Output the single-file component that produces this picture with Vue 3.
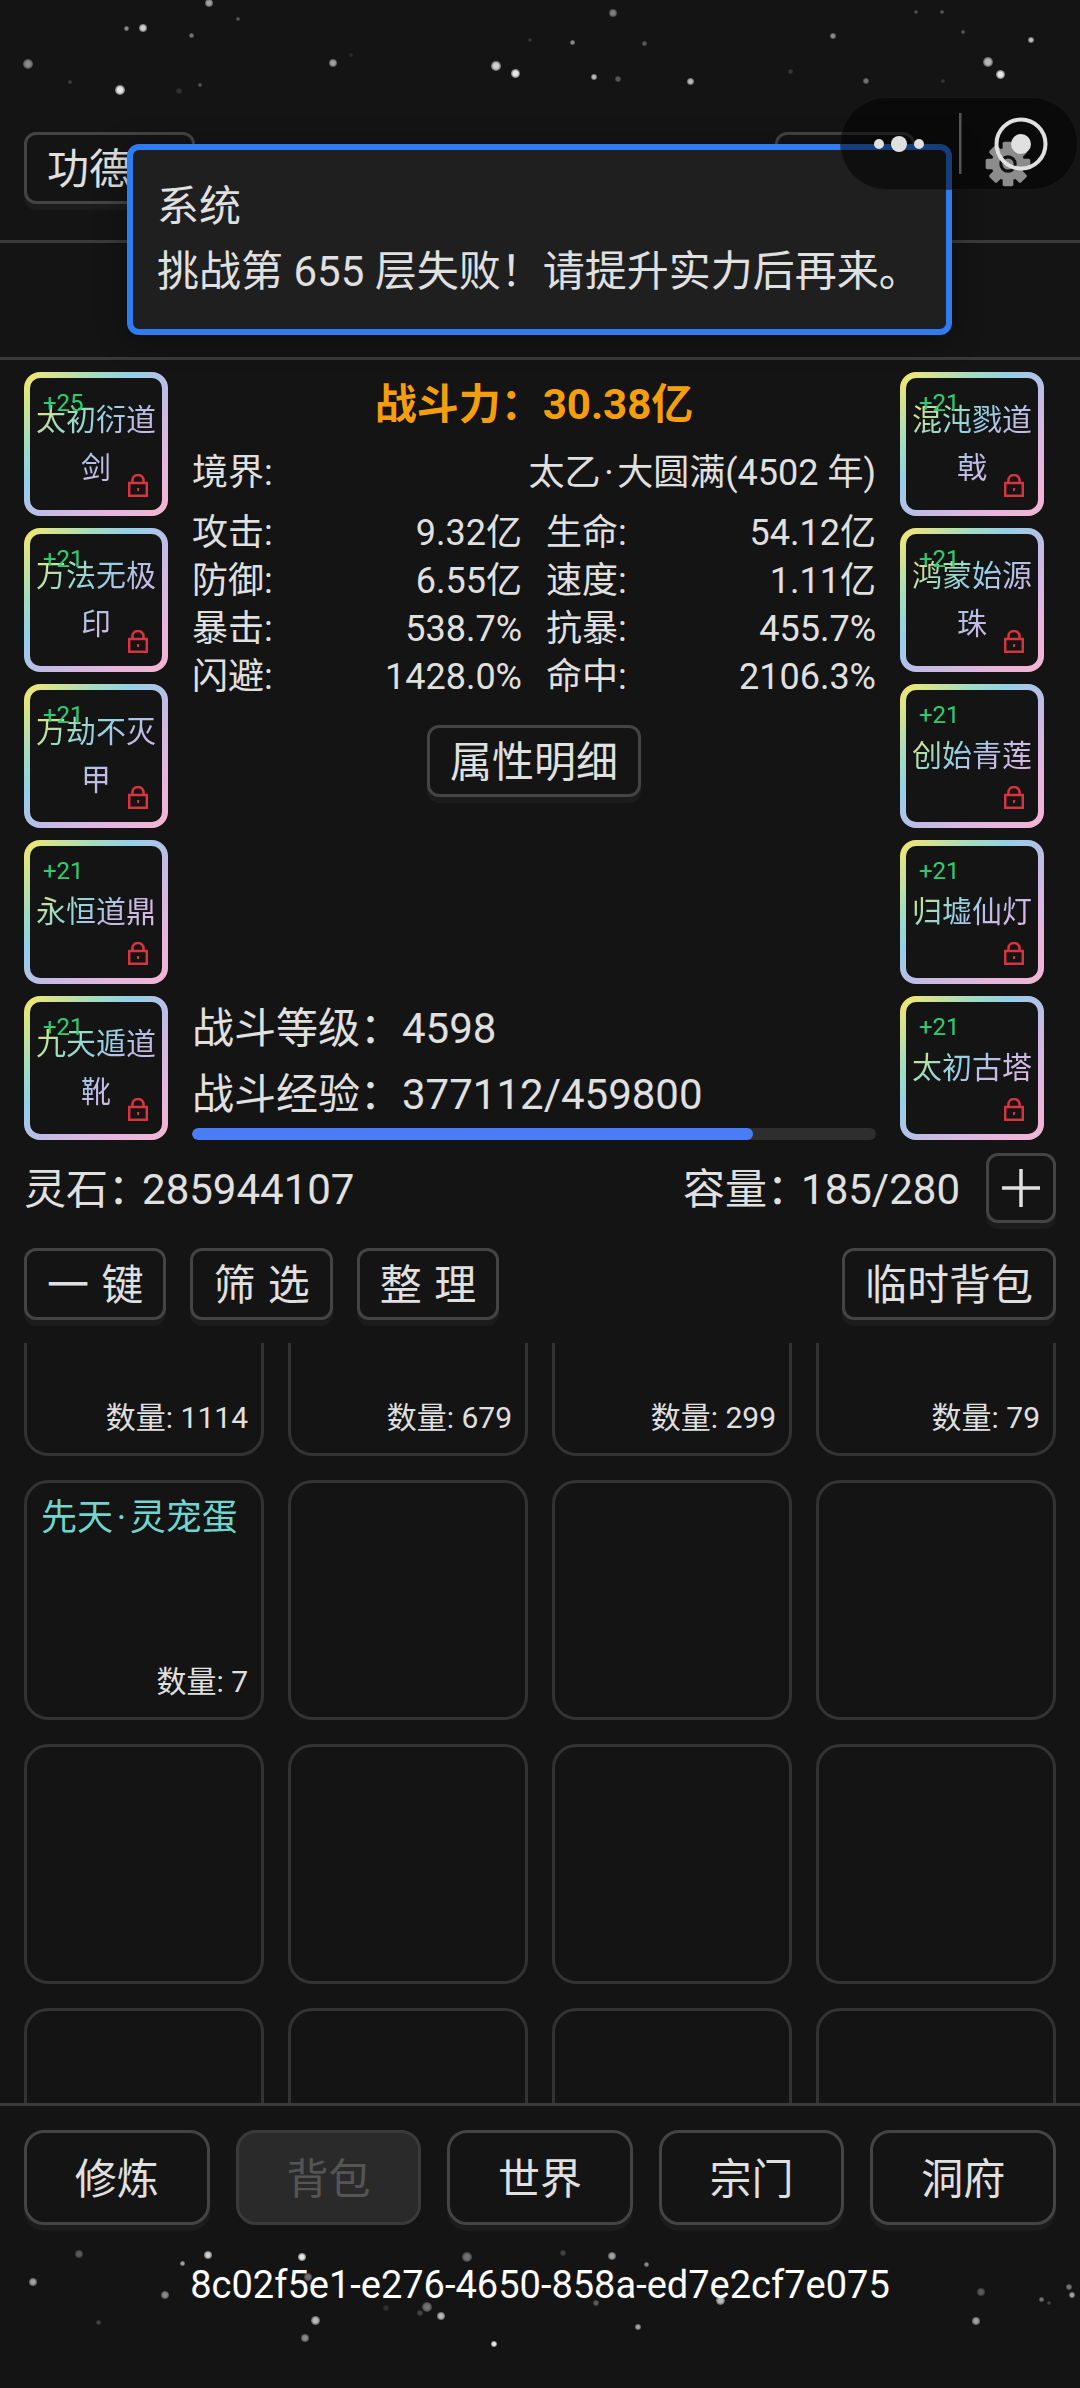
<script setup>
const stars = [
  [209, 3, 4, 0.6], [143, 28, 4, 0.8], [126, 28, 2.5, 0.5], [238, 19, 2, 0.3], [191, 35, 2.5, 0.4],
  [28, 64, 5, 0.5], [120, 90, 5, 0.9], [70, 82, 2, 0.2], [200, 85, 2, 0.3], [179, 91, 3, 0.12],
  [333, 63, 4, 0.6], [496, 66, 5, 0.8], [515, 73, 4.5, 0.9], [594, 77, 3, 0.7], [618, 79, 3, 0.3],
  [690, 81, 3.5, 0.7], [613, 13, 4, 0.45], [572, 42, 2.5, 0.5], [644, 43, 2.5, 0.3], [530, 40, 2, 0.15],
  [833, 36, 3, 0.5], [916, 12, 2, 0.25], [942, 12, 2, 0.3], [963, 32, 2, 0.3], [1031, 40, 3, 0.7],
  [988, 62, 5, 0.7], [1000, 74, 4.5, 0.9], [866, 81, 3, 0.4], [790, 71, 2.5, 0.15], [943, 81, 2, 0.15],
  [351, 55, 2, 0.1],
  [79, 2254, 4, 0.3], [208, 2255, 4, 0.8], [182, 2263, 2.5, 0.6], [302, 2257, 4, 0.9], [467, 2257, 5, 0.4],
  [563, 2253, 3, 0.2], [612, 2256, 4, 0.6], [646, 2264, 2.5, 0.5], [33, 2282, 4, 0.6], [165, 2295, 4, 0.5],
  [308, 2277, 4, 0.4], [427, 2307, 5, 0.4], [441, 2316, 4, 0.7], [420, 2313, 3, 0.2], [386, 2308, 3, 0.12],
  [315, 2320, 4.5, 0.7], [305, 2338, 4, 0.5], [98, 2322, 2.5, 0.2], [596, 2303, 3, 0.3], [720, 2300, 4.5, 0.7],
  [638, 2327, 3, 0.6], [494, 2344, 3, 0.9], [981, 2292, 4, 0.3], [976, 2321, 4, 0.6], [1069, 2287, 3, 0.4],
  [1072, 2295, 3, 0.6], [1041, 2299, 2.5, 0.4], [1049, 2303, 2, 0.2]
]

const leftGear = [
  { name: '太初衍道剑', level: 25 },
  { name: '万法无极印', level: 21 },
  { name: '万劫不灭甲', level: 21 },
  { name: '永恒道鼎', level: 21 },
  { name: '九天遁道靴', level: 21 }
]
const rightGear = [
  { name: '混沌戮道戟', level: 21 },
  { name: '鸿蒙始源珠', level: 21 },
  { name: '创始青莲', level: 21 },
  { name: '归墟仙灯', level: 21 },
  { name: '太初古塔', level: 21 }
]
const gearCols = [leftGear, rightGear]

const stats = [
  ['攻击', '9.32亿'], ['生命', '54.12亿'],
  ['防御', '6.55亿'], ['速度', '1.11亿'],
  ['暴击', '538.7%'], ['抗暴', '455.7%'],
  ['闪避', '1428.0%'], ['命中', '2106.3%']
]

const expPercent = (377112 / 459800) * 100

const bag = [
  { count: 1114 }, { count: 679 }, { count: 299 }, { count: 79 },
  { name: '先天\u200a·\u200a灵宠蛋', count: 7 }, {}, {}, {},
  {}, {}, {}, {},
  {}, {}, {}, {}
]

const tabs = ['修炼', '背包', '世界', '宗门', '洞府']
</script>

<template>
  <div class="page">
    <i
      v-for="(s, i) in stars"
      :key="i"
      class="star"
      :style="{ left: s[0] - s[2] + 'px', top: s[1] - s[2] + 'px', width: s[2] * 2 + 'px', height: s[2] * 2 + 'px', opacity: s[3] }"
    />

    <div class="header">
      <button class="btn merit">功德</button>
      <button class="btn settings" />
    </div>
    <div class="sub-header" />

    <div class="main">
      <template v-for="(col, c) in gearCols" :key="c">
        <div class="gear-col">
          <div v-for="g in col" :key="g.name" class="gear">
            <span class="gear-level">+{{ g.level }}</span>
            <span class="gear-name">{{ g.name }}</span>
            <svg class="lock" width="20" height="23" viewBox="0 0 20 23" fill="none">
              <path d="M4.5 9V6a5.5 5 0 0 1 11 0v3" stroke="#d8333f" stroke-width="2.5" />
              <rect x="1.2" y="9" width="17.6" height="12.8" stroke="#d8333f" stroke-width="2.5" />
              <rect x="9" y="14" width="2" height="3" fill="#d8333f" />
            </svg>
          </div>
        </div>
        <div v-if="c === 0" class="center">
          <div>
            <div class="power">战斗力&#65306;30.38亿</div>
            <div class="realm"><span>境界:</span><span>太乙&#8202;·&#8202;大圆满(4502 年)</span></div>
            <div class="stats">
              <div v-for="s in stats" :key="s[0]" class="stat">
                <span>{{ s[0] }}:</span><span>{{ s[1] }}</span>
              </div>
            </div>
            <div class="detail-wrap"><button class="btn">属性明细</button></div>
          </div>
          <div>
            <div class="level-line">战斗等级&#65306;4598</div>
            <div class="level-line">战斗经验&#65306;377112/459800</div>
            <div class="bar"><div class="bar-fill" :style="{ width: expPercent + '%' }" /></div>
          </div>
        </div>
      </template>
    </div>

    <div class="stone-row">
      <span class="stone-text">灵石<span class="colon">&#65306;</span>285944107</span>
      <div class="capacity">
        <span class="stone-text">容量<span class="colon">&#65306;</span>185/280</span>
        <button class="btn plus">
          <svg width="38" height="38" viewBox="0 0 38 38"><path d="M19 0v38M0 19h38" stroke="#e0e0e0" stroke-width="3.5" /></svg>
        </button>
      </div>
    </div>

    <div class="toolbar">
      <button class="btn">一 键</button>
      <button class="btn">筛 选</button>
      <button class="btn">整 理</button>
      <button class="btn push">临时背包</button>
    </div>

    <div class="bag-view">
      <div class="bag-grid">
        <div v-for="(item, i) in bag" :key="i" class="cell">
          <div v-if="item.name" class="cell-name">{{ item.name }}</div>
          <div v-if="item.count" class="cell-count">数量: {{ item.count }}</div>
        </div>
      </div>
    </div>

    <div class="footer">
      <div class="tabs">
        <button v-for="t in tabs" :key="t" class="btn tab" :class="{ active: t === '背包' }">{{ t }}</button>
      </div>
      <div class="uuid">8c02f5e1-e276-4650-858a-ed7e2cf7e075</div>
    </div>

    <div class="dialog">
      <div>系统</div>
      <div>挑战第 655 层失败&#65281;请提升实力后再来。</div>
    </div>

    <div class="capsule">
      <svg class="cog" width="50" height="50" viewBox="0 0 56 56">
        <g fill="#8c8c8c">
          <circle cx="28" cy="28" r="18.5" />
          <rect v-for="a in [0, 45, 90, 135, 180, 225, 270, 315]" :key="a" x="22" y="3" width="12" height="10" rx="2" :transform="`rotate(${a} 28 28)`" />
        </g>
        <circle cx="28" cy="28" r="8" fill="none" stroke="#111" stroke-width="3.5" />
      </svg>
      <svg class="capsule-icons" width="238" height="93" viewBox="0 0 238 93">
        <circle cx="39" cy="47" r="5" fill="#e0e0e0" />
        <circle cx="59" cy="47" r="8" fill="#e0e0e0" />
        <circle cx="79" cy="47" r="5" fill="#e0e0e0" />
        <rect x="119" y="16" width="2.5" height="61" fill="#555" />
        <circle cx="181" cy="47" r="24.5" fill="none" stroke="#e0e0e0" stroke-width="4" />
        <circle cx="181" cy="47" r="10" fill="#e0e0e0" />
      </svg>
    </div>
  </div>
</template>

<style scoped>
.page {
  position: relative;
  height: 2388px;
  overflow: hidden;
  background: #141414;
  color: #e0e0e0;
  font-family: Roboto, "Noto Sans CJK SC", sans-serif;
  font-size: 42px;
}

.star {
  position: absolute;
  border-radius: 50%;
  background: radial-gradient(circle, #fff 35%, rgba(255, 255, 255, 0) 100%);
}

.btn {
  height: 72px;
  padding: 0 20px 5px;
  border: 3px solid #444;
  border-radius: 12px;
  background: #141414;
  box-shadow: 0 6px 0 #1c1c1c;
  color: #e0e0e0;
  font: inherit;
  word-spacing: 2px;
  white-space: nowrap;
}

.header {
  position: relative;
  display: flex;
  justify-content: space-between;
  height: 243px;
  padding: 132px 165px 0 24px;
  box-sizing: border-box;
  border-bottom: 3px solid #3a3a3a;
}

.merit {
  width: 171px;
  text-align: left;
}

.settings {
  width: 140px;
}

.sub-header {
  position: relative;
  height: 114px;
  border-bottom: 3px solid #3a3a3a;
}

.main {
  display: flex;
  gap: 24px;
  padding: 12px 36px 0 24px;
}

.gear-col {
  display: flex;
  flex-direction: column;
  gap: 12px;
  width: 144px;
}

.gear {
  position: relative;
  display: flex;
  align-items: center;
  justify-content: center;
  height: 144px;
  box-sizing: border-box;
  border: 6px solid transparent;
  border-radius: 16px;
  background:
    linear-gradient(#141414, #141414) padding-box,
    linear-gradient(135deg, #f8e86a 0%, #a6dcc0 25%, #94d0e6 38%, #c0bce6 55%, #e4b6e0 78%, #f6b4d2 100%) border-box;
}

.gear-level {
  position: absolute;
  top: 10px;
  left: 13px;
  color: #2ecc71;
  font-size: 24px;
  line-height: 30px;
}

.gear-name {
  width: 120px;
  background: linear-gradient(135deg, #f8e86a 0%, #9fdcc0 25%, #94d0e6 42%, #c0bce6 60%, #e4b6e0 100%);
  background-clip: text;
  -webkit-background-clip: text;
  color: transparent;
  font-size: 30px;
  line-height: 48px;
  text-align: center;
}

.lock {
  position: absolute;
  right: 14px;
  bottom: 13px;
}

.center {
  display: flex;
  flex-direction: column;
  justify-content: space-between;
  width: 684px;
  height: 768px;
}

.power {
  padding-top: 2px;
  color: #f59e0b;
  font-weight: 700;
  line-height: 62px;
  text-align: center;
}

.realm,
.stat {
  display: flex;
  justify-content: space-between;
  font-size: 36px;
  line-height: 48px;
}

.realm {
  margin-top: 13px;
}

.stats {
  display: grid;
  grid-template-columns: 330px 330px;
  column-gap: 24px;
  margin-top: 12px;
}

.detail-wrap {
  display: flex;
  justify-content: center;
  margin-top: 24px;
}

.level-line {
  line-height: 66px;
}

.bar {
  height: 12px;
  overflow: hidden;
  border-radius: 6px;
  background: #2e2e2e;
}

.bar-fill {
  height: 100%;
  border-radius: 6px;
  background: #4a7cf6;
}

.stone-row {
  display: flex;
  align-items: center;
  justify-content: space-between;
  height: 70px;
  margin-top: 13px;
  padding: 0 24px;
}

.stone-text {
  margin-bottom: 5px;
}

.colon {
  margin-right: -8px;
}

.capacity {
  display: flex;
  align-items: center;
  gap: 26px;
}

.plus {
  display: flex;
  align-items: center;
  justify-content: center;
  width: 70px;
  height: 70px;
  padding: 0;
}

.toolbar {
  display: flex;
  gap: 24px;
  margin-top: 25px;
  padding: 0 24px;
}

.push {
  margin-left: auto;
}

.bag-view {
  height: 760px;
  margin-top: 23px;
  overflow: hidden;
}

.bag-grid {
  display: grid;
  grid-template-columns: repeat(4, 240px);
  grid-auto-rows: 240px;
  gap: 24px;
  margin-top: -127px;
  padding: 0 24px;
}

.cell {
  position: relative;
  box-sizing: border-box;
  border: 3px solid #333;
  border-radius: 24px;
}

.cell-name {
  padding: 11px 0 0 14px;
  color: #6fd6cf;
  font-size: 36px;
  line-height: 48px;
}

.cell-count {
  position: absolute;
  right: 13px;
  bottom: 15px;
  font-size: 30px;
  line-height: 40px;
}

.footer {
  position: relative;
  border-top: 3px solid #3a3a3a;
}

.tabs {
  display: grid;
  grid-template-columns: repeat(5, 1fr);
  gap: 26px;
  padding: 24px 24px 0;
}

.tab {
  height: 95px;
  padding: 0 0 5px;
  border-radius: 20px;
}

.tab.active {
  border-color: #3a3a3a;
  background: #2a2a2a;
  box-shadow: none;
  color: #555;
}

.uuid {
  margin-top: 35px;
  color: #fff;
  font-size: 38px;
  line-height: 50px;
  text-align: center;
}

.dialog {
  position: absolute;
  top: 144px;
  left: 127px;
  width: 825px;
  height: 191px;
  padding: 24px 0 0 24px;
  box-sizing: border-box;
  border: 6px solid #2f7bf0;
  border-radius: 12px;
  background: #1f1f20;
  box-shadow: 0 4px 30px rgba(0, 0, 0, 0.35);
  line-height: 65px;
  white-space: nowrap;
}

.capsule {
  position: absolute;
  top: 97px;
  left: 840px;
  width: 238px;
  height: 93px;
  box-sizing: border-box;
  border: 1.5px solid rgba(255, 255, 255, 0.05);
  border-radius: 47px;
  background: rgba(0, 0, 0, 0.5);
}

.cog {
  position: absolute;
  top: 41px;
  left: 142px;
}

.capsule-icons {
  position: absolute;
  top: -1.5px;
  left: -1.5px;
}
</style>

<style>
body {
  background: #141414;
}
</style>
